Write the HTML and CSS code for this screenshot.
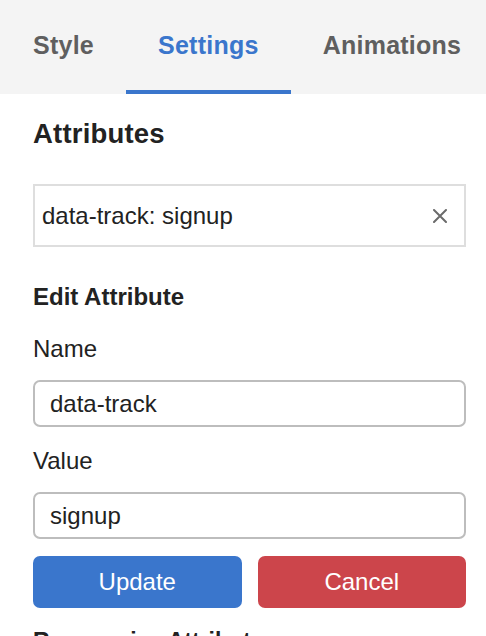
FILE: index.html
```html
<!DOCTYPE html>
<html>
<head>
<meta charset="utf-8">
<link rel="stylesheet" href="styles.css">
</head>
<body>
<div class="panel">
  <nav class="tabs">
    <div class="tab">Style</div>
    <div class="tab active">Settings</div>
    <div class="tab">Animations</div>
  </nav>
  <div class="content">
    <h2 class="section-title">Attributes</h2>
    <div class="chip">
      <span class="chip-text">data-track: signup</span>
      <svg class="chip-close" width="14" height="14" viewBox="0 0 14 14"><path d="M1 1 L13 13 M13 1 L1 13" stroke="#6b6b6b" stroke-width="2" stroke-linecap="round" fill="none"/></svg>
    </div>
    <h3 class="sub-title">Edit Attribute</h3>
    <label class="field-label">Name</label>
    <input class="field-input" type="text" value="data-track">
    <label class="field-label field-label-next">Value</label>
    <input class="field-input" type="text" value="signup">
    <div class="actions">
      <button class="btn btn-primary">Update</button>
      <button class="btn btn-danger">Cancel</button>
    </div>
    <h3 class="sub-title next-section">Responsive Attributes</h3>
  </div>
</div>
</body>
</html>
```
FILE: styles.css
```css
html, body {
  margin: 0;
  padding: 0;
  background: #ffffff;
  overflow: hidden;
}
body {
  font-family: "Liberation Sans", Arial, Helvetica, sans-serif;
  color: #222222;
}
.panel {
  width: 486px;
  height: 636px;
  overflow: hidden;
}
.tabs {
  display: flex;
  background: #f4f4f4;
  padding-left: 1px;
  white-space: nowrap;
}
.tab {
  flex: none;
  padding: 30px 32px;
  border-bottom: 4px solid transparent;
  font-size: 25px;
  line-height: 30px;
  font-weight: 700;
  letter-spacing: 0.25px;
  color: #5f5f5f;
}
.tab.active {
  color: #3a76cc;
  border-bottom-color: #3a76cc;
}
.content {
  padding: 0 20px 0 33px;
  display: flex;
  flex-direction: column;
}
.section-title {
  margin: 24px 0 0;
  font-size: 27.5px;
  line-height: 32px;
  font-weight: 700;
  letter-spacing: 0.2px;
  color: #222222;
}
.chip {
  margin-top: 34px;
  height: 63px;
  box-sizing: border-box;
  border: 2px solid #dedede;
  display: flex;
  align-items: center;
  justify-content: space-between;
  padding: 0 17px 0 7px;
}
.chip-text {
  font-size: 24px;
  line-height: 28px;
  color: #222222;
}
.chip-close {
  display: block;
  flex: none;
}
.sub-title {
  margin: 36px 0 0;
  font-size: 24px;
  line-height: 28px;
  font-weight: 700;
  color: #222222;
}
.field-label {
  display: block;
  margin-top: 24px;
  font-size: 24px;
  line-height: 28px;
  color: #222222;
}
.field-label-next {
  margin-top: 20px;
}
.field-input {
  display: block;
  margin: 17px 0 0;
  width: 100%;
  height: 47px;
  box-sizing: border-box;
  border: 2px solid #bdbdbd;
  border-radius: 7px;
  padding: 0 15px;
  font-family: "Liberation Sans", Arial, Helvetica, sans-serif;
  font-size: 24px;
  color: #222222;
  background: #ffffff;
  outline: none;
}
.actions {
  margin-top: 17px;
  display: grid;
  grid-template-columns: 1fr 1fr;
  gap: 16px;
}
.btn {
  height: 52px;
  border: none;
  border-radius: 7px;
  font-family: "Liberation Sans", Arial, Helvetica, sans-serif;
  font-size: 24px;
  color: #ffffff;
  padding: 0;
}
.btn-primary {
  background: #3a76cc;
}
.btn-danger {
  background: #cc454b;
}
.next-section {
  margin-top: 19px;
  font-size: 23px;
}
```
